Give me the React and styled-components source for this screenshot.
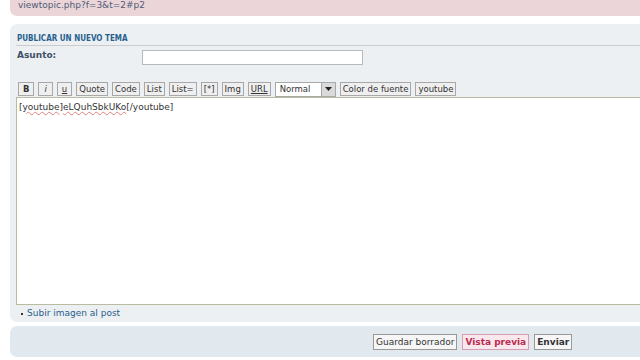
import { createGlobalStyle, styled } from "styled-components"

const Global = createGlobalStyle`
    html, body {
        margin: 0;
        padding: 0;
        background: #ffffff;
        overflow: hidden;
    }
    body {
        font-family: "DejaVu Sans", Verdana, sans-serif;
        font-size: 9px;
        color: #333333;
    }
`

const Page = styled.div`
    width: 640px;
    height: 360px;
    padding-left: 10px;
    box-sizing: border-box;
    display: flex;
    flex-direction: column;
`

const Notice = styled.div`
    height: 16px;
    background: #ECD5D8;
    border-radius: 0 0 0 7px;
    margin-right: -20px;
    padding-left: 8px;
    color: #4C5D77;
    font-size: 9px;
    line-height: 10px;
    box-sizing: border-box;
`

const Panel = styled.div`
    margin-top: 8px;
    margin-right: -20px;
    background: #ECF0F3;
    border-radius: 7px;
    padding: 8px 6px 3px 6px;
    display: flex;
    flex-direction: column;
`

const Title = styled.h3`
    margin: 0;
    padding: 1px 1px 1px 1px;
    font-family: "DejaVu Sans Condensed", "DejaVu Sans", sans-serif;
    font-size: 8px;
    font-weight: bold;
    text-transform: uppercase;
    color: #28618F;
    border-bottom: 1px solid #CCCCCC;
    line-height: 11px;
`

const Row = styled.div`
    display: flex;
    align-items: center;
    height: 20px;
    padding-left: 1px;
`

const Label = styled.label`
    width: 125px;
    font-weight: bold;
    font-size: 9px;
    color: #425067;
    align-self: flex-start;
    line-height: 18px;
`

const TextInput = styled.input`
    width: 221px;
    height: 15px;
    box-sizing: border-box;
    border: 1px solid #B4BAC0;
    background: #ffffff;
    margin: 4px 0 0 0;
    align-self: flex-start;
`

const Toolbar = styled.div`
    display: flex;
    align-items: center;
    gap: 4px;
    margin-top: 16px;
    padding-left: 2px;
    height: 14px;
`

const ToolButton = styled.button`
    height: 14px;
    padding: 0 ${p => p.$pad || 2}px;
    margin: 0;
    font-family: "DejaVu Sans", Verdana, sans-serif;
    font-size: 8.5px;
    line-height: 12px;
    color: #333333;
    background: #EFEFEF;
    border: 1px solid #A8A8A8;
    box-sizing: border-box;
    font-weight: ${p => (p.$bold ? "bold" : "normal")};
    font-style: ${p => (p.$italic ? "italic" : "normal")};
    text-decoration: ${p => (p.$underline ? "underline" : "none")};
`

const Select = styled.div`
    width: 61px;
    height: 15px;
    box-sizing: border-box;
    border: 1px solid #A8A8A8;
    background: #ffffff;
    display: flex;
    align-items: center;
    justify-content: space-between;
    padding-left: 4px;
    font-size: 8.5px;
`

const SelectArrow = styled.span`
    width: 13px;
    height: 13px;
    background: #DADADA;
    border-left: 1px solid #A8A8A8;
    display: flex;
    align-items: center;
    justify-content: center;
`

const Editor = styled.div`
    margin-top: 1px;
    height: 208px;
    box-sizing: border-box;
    background: #ffffff;
    border: 1px solid #B9BCA0;
    border-right: none;
    padding: 3px 2px;
    font-size: 9px;
    color: #333333;
    line-height: 12px;
`

const Squiggle = styled.span`
    text-decoration: underline wavy #E08080;
    text-decoration-thickness: 1px;
`

const Links = styled.ul`
    margin: 2px 0 0 0;
    padding: 0 0 0 5px;
    list-style: none;
    font-size: 9px;
    line-height: 12px;
`

const LinkItem = styled.li`
    color: #2A5D8A;
    &::before {
        content: "";
        display: inline-block;
        width: 2px;
        height: 2px;
        background: #333;
        margin-right: 4px;
        vertical-align: middle;
    }
`

const SubmitPanel = styled.div`
    margin-top: 4px;
    margin-right: -20px;
    height: 31px;
    background: #E1E9EF;
    border-radius: 7px;
    display: flex;
    align-items: center;
    padding-left: 363px;
    gap: 5px;
`

const SubmitButton = styled.button`
    height: 16px;
    margin: 0;
    padding: 0 2px;
    box-sizing: border-box;
    font-family: "DejaVu Sans", Verdana, sans-serif;
    font-size: 9px;
    line-height: 12px;
    background: ${p => (p.$accent ? "#F9E7EE" : "#F6F6F6")};
    color: ${p => (p.$accent ? "#BC2A4D" : "#333333")};
    border: 1px solid ${p => (p.$accent ? "#D69EB0" : "#999999")};
    font-weight: ${p => (p.$bold ? "bold" : "normal")};
`

const tools = ["Quote", "Code", "List", "List=", "[*]", "Img"]

export default function App() {
    return (
        <>
            <Global />
            <Page>
                <Notice>viewtopic.php?f=3&amp;t=2#p2</Notice>
                <Panel>
                    <Title>Publicar un nuevo tema</Title>
                    <Row>
                        <Label>Asunto:</Label>
                        <TextInput />
                    </Row>
                    <Toolbar>
                        <ToolButton $bold $pad={4}>B</ToolButton>
                        <ToolButton $italic $pad={5}>i</ToolButton>
                        <ToolButton $underline $pad={4}>u</ToolButton>
                        {tools.map(t => (
                            <ToolButton key={t}>{t}</ToolButton>
                        ))}
                        <ToolButton $underline>URL</ToolButton>
                        <Select>
                            Normal
                            <SelectArrow>
                                <svg width="7" height="4" viewBox="0 0 7 4">
                                    <path d="M0 0 H7 L3.5 4 Z" fill="#222" />
                                </svg>
                            </SelectArrow>
                        </Select>
                        <ToolButton>Color de fuente</ToolButton>
                        <ToolButton>youtube</ToolButton>
                    </Toolbar>
                    <Editor>
                        [<Squiggle>youtube</Squiggle>]<Squiggle>eLQuhSbkUKo</Squiggle>[/youtube]
                    </Editor>
                    <Links>
                        <LinkItem>Subir imagen al post</LinkItem>
                    </Links>
                </Panel>
                <SubmitPanel>
                    <SubmitButton>Guardar borrador</SubmitButton>
                    <SubmitButton $accent $bold>Vista previa</SubmitButton>
                    <SubmitButton $bold>Enviar</SubmitButton>
                </SubmitPanel>
            </Page>
        </>
    )
}
